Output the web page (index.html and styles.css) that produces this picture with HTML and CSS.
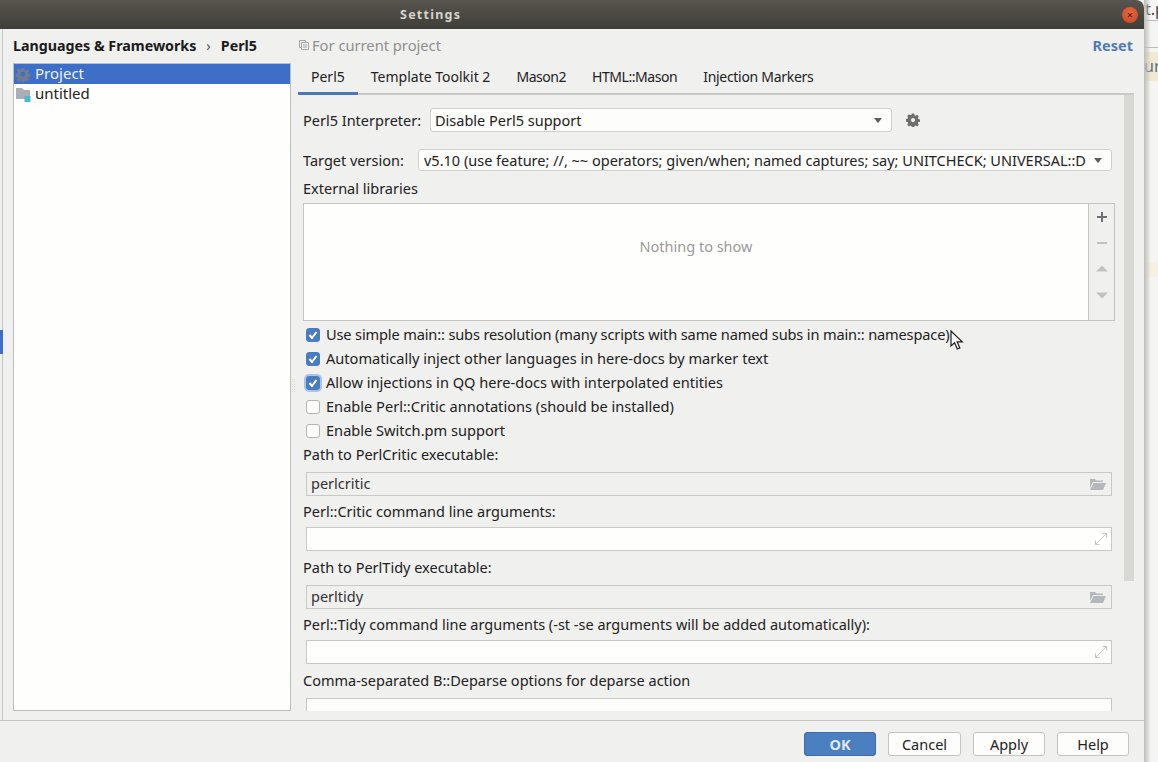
FILE: index.html
```html
<!DOCTYPE html>
<html lang="en">
<head>
<meta charset="utf-8">
<title>Settings</title>
<link rel="stylesheet" href="styles.css">
</head>
<body>
<div class="dialog">
  <div class="titlebar">
    <span class="title">Settings</span>
    <span class="close">×</span>
  </div>
  <div class="main">
    <div class="edge"><div class="edge-mark"></div></div>
    <div class="left">
      <div class="crumbs"><b>Languages &amp; Frameworks</b><span class="sep">›</span><b>Perl5</b></div>
      <div class="tree">
        <div class="tree-row selected">
          <svg class="tree-icon" width="16" height="16" viewBox="0 0 16 16"><path fill="#6f7c94" fill-rule="evenodd" d="M6.6 1h2.8l.4 2 1.5.7 1.8-1 1.9 2-1 1.7.6 1.5 2 .5v2.6l-2 .5-.6 1.5 1 1.7-1.9 2-1.8-1-1.5.7-.4 2H6.600l-.4-2-1.500-.7-1.800 1-1.900-2 1-1.700-.6-1.500-2-.5V7.400l2-.5.6-1.500-1-1.700 1.900-2 1.800 1 1.500-.7zM8 5.500a2.800 2.800 0 1 0 0 5.600 2.800 2.800 0 0 0 0-5.600z" transform="translate(1.100 1.100) scale(.86)"/></svg>
          <span class="tree-text">Project</span>
        </div>
        <div class="tree-row">
          <svg class="tree-icon" width="16" height="16" viewBox="0 0 16 16"><path fill="#a9afb6" d="M1 2h6l2 2h6v9H1z"/><rect x="9.500" y="10" width="6" height="6" fill="#4fb8d0"/></svg>
          <span class="tree-text">untitled</span>
        </div>
      </div>
    </div>
    <div class="right">
      <div class="head">
        <span class="scope">
          <svg width="10" height="10" viewBox="0 0 10 10"><path fill="none" stroke="#a6a6a6" d="M.5.5h6v2M2.500 2.500h7v7h-7zM.5.5v7h2M4 5h4M4 7h4"/></svg>
          For current project
        </span>
        <span class="reset">Reset</span>
      </div>
      <div class="tabs">
        <span class="tab active">Perl5</span>
        <span class="tab">Template Toolkit 2</span>
        <span class="tab narrow">Mason2</span>
        <span class="tab narrow">HTML::Mason</span>
        <span class="tab slim">Injection Markers</span>
      </div>
      <div class="pane">
        <div class="content">
          <div class="row row-interp">
            <span class="row-label">Perl5 Interpreter:</span>
            <div class="combo combo-interp"><span class="combo-text">Disable Perl5 support</span><i class="caret"></i></div>
            <svg class="gear" width="14" height="14" viewBox="0 0 14 14"><path fill="#6e6e6e" fill-rule="evenodd" d="M5.800.5h2.400l.3 1.800 1.100.5 1.500-1 1.700 1.700-1 1.500.5 1.100 1.800.3v2.400l-1.800.3-.5 1.100 1 1.500-1.700 1.700-1.500-1-1.100.5-.3 1.800H5.800l-.3-1.800-1.100-.5-1.500 1-1.700-1.700 1-1.500-.5-1.100-1.800-.3V5.900l1.800-.3.5-1.100-1-1.500 1.700-1.700 1.500 1 1.100-.5zM7 5a2.100 2.100 0 1 0 0 4.200A2.100 2.100 0 0 0 7 5z"/></svg>
          </div>
          <div class="row row-target">
            <span class="row-label">Target version:</span>
            <div class="combo combo-target"><span class="combo-text">v5.10 (use feature; //, ~~ operators; given/when; named captures; say; UNITCHECK; UNIVERSAL::D</span><i class="caret"></i></div>
          </div>
          <div class="text-label libs-label">External libraries</div>
          <div class="libs">
            <div class="libs-empty">Nothing to show</div>
            <div class="libs-tools">
              <svg width="12" height="12" viewBox="0 0 12 12"><path stroke="#6e6e6e" stroke-width="2" d="M6 1v10M1 6h10"/></svg>
              <svg width="12" height="12" viewBox="0 0 12 12"><path stroke="#c2c2be" stroke-width="2" d="M1 6h10"/></svg>
              <svg width="12" height="12" viewBox="0 0 12 12"><path fill="#c2c2be" d="M6 2.500l6 6H0z"/></svg>
              <svg width="12" height="12" viewBox="0 0 12 12"><path fill="#c2c2be" d="M0 3.500h12l-6 6z"/></svg>
            </div>
          </div>
          <div class="checks">
            <label class="check"><span class="box on"><svg width="14" height="14" viewBox="0 0 14 14"><path fill="none" stroke="#fff" stroke-width="2" d="M3.500 7l2.500 3 4.500-6"/></svg></span><span class="check-text tight">Use simple main:: subs resolution (many scripts with same named subs in main:: namespace)</span></label>
            <label class="check"><span class="box on"><svg width="14" height="14" viewBox="0 0 14 14"><path fill="none" stroke="#fff" stroke-width="2" d="M3.500 7l2.500 3 4.500-6"/></svg></span><span class="check-text">Automatically inject other languages in here-docs by marker text</span></label>
            <label class="check"><span class="box on focus"><svg width="14" height="14" viewBox="0 0 14 14"><path fill="none" stroke="#fff" stroke-width="2" d="M3.500 7l2.500 3 4.500-6"/></svg></span><span class="check-text">Allow injections in QQ here-docs with interpolated entities</span></label>
            <label class="check"><span class="box"></span><span class="check-text">Enable Perl::Critic annotations (should be installed)</span></label>
            <label class="check"><span class="box"></span><span class="check-text">Enable Switch.pm support</span></label>
          </div>
          <div class="text-label">Path to PerlCritic executable:</div>
          <div class="field disabled"><span class="field-text">perlcritic</span>
            <svg width="16" height="12" viewBox="0 0 16 12"><path fill="#b4b8bc" d="M0 1h5l1.500 1.500H13V4H3L0 10zM3.500 5H16l-3 7H0z"/></svg>
          </div>
          <div class="text-label after-disabled">Perl::Critic command line arguments:</div>
          <div class="field editable"><span></span>
            <svg width="14" height="14" viewBox="0 0 14 14"><path fill="none" stroke="#c0c4c8" d="M8.500 1.500H12.500V5.500M12.500 1.500L1.500 12.500M1.500 8.500V12.500H5.500"/></svg>
          </div>
          <div class="text-label after-editable">Path to PerlTidy executable:</div>
          <div class="field disabled"><span class="field-text">perltidy</span>
            <svg width="16" height="12" viewBox="0 0 16 12"><path fill="#b4b8bc" d="M0 1h5l1.500 1.500H13V4H3L0 10zM3.500 5H16l-3 7H0z"/></svg>
          </div>
          <div class="text-label after-disabled">Perl::Tidy command line arguments (-st -se arguments will be added automatically):</div>
          <div class="field editable"><span></span>
            <svg width="14" height="14" viewBox="0 0 14 14"><path fill="none" stroke="#c0c4c8" d="M8.500 1.500H12.500V5.500M12.500 1.500L1.500 12.500M1.500 8.500V12.500H5.500"/></svg>
          </div>
          <div class="text-label after-editable">Comma-separated B::Deparse options for deparse action</div>
          <div class="field editable last"></div>
        </div>
        <div class="scrollbar"><div class="thumb"></div></div>
      </div>
    </div>
  </div>
  <div class="footer">
    <button class="btn primary">OK</button>
    <button class="btn wide">Cancel</button>
    <button class="btn">Apply</button>
    <button class="btn">Help</button>
  </div>
</div>
<div class="backdrop">
  <div class="bd-top">t.p</div>
  <div class="bd-gap"></div>
  <div class="bd-band">ur</div>
  <div class="bd-faint"></div>
</div>
<div class="grip"></div>
<svg class="pointer" width="14" height="21" viewBox="0 0 14 21"><path fill="#fff" stroke="#1c1c1c" stroke-width="1.200" d="M1 1v15l3.600-3.200 2.700 6.200 2.600-1.100-2.700-6h5z"/></svg>
</body>
</html>
```
FILE: styles.css
```css
* { box-sizing: border-box; }
html, body { margin: 0; padding: 0; }
body {
  position: relative;
  display: flex;
  width: 1158px;
  height: 762px;
  overflow: hidden;
  background: #f5f5f3;
  font-family: "Noto Sans", "Open Sans", sans-serif;
  font-size: 14.500px;
  color: #222;
}
.dialog {
  width: 1144px;
  height: 762px;
  display: flex;
  flex-direction: column;
  background: #f0f0ee;
}
.titlebar {
  height: 29px;
  flex: none;
  display: flex;
  align-items: center;
  justify-content: space-between;
  padding: 0 6px 0 400px;
  background: linear-gradient(#57554d, #3f3e38);
  border-radius: 0 8px 0 0;
}
.title {
  font-weight: 700;
  font-size: 12.500px;
  letter-spacing: 1.250px;
  color: #d6d3ca;
}
.close {
  width: 16px;
  height: 16px;
  border-radius: 50%;
  background: radial-gradient(circle at 50% 35%, #e8683f, #c9431f);
  color: #3a2018;
  font-size: 11px;
  line-height: 16px;
  text-align: center;
}
.main {
  height: 692px;
  flex: none;
  display: flex;
  border-bottom: 1px solid #c4c6c4;
}
.edge {
  width: 3px;
  border-right: 1px solid #c2c8cc;
  padding-top: 301px;
}
.edge-mark { height: 24px; background: #3d6fc8; margin-right: -1px; }
.left { width: 295px; padding-left: 10px; flex: none; }
.crumbs {
  height: 34px;
  display: flex;
  align-items: center;
  padding-bottom: 2px;
  color: #1a1a1a;
  font-size: 14.250px;
}
.crumbs b { font-weight: 700; }
.sep { margin: 0 10px; color: #555; }
.tree {
  width: 278px;
  height: 648px;
  background: #fefefc;
  border: 1px solid #bcbfc0;
}
.tree-row {
  height: 20px;
  display: flex;
  align-items: center;
  gap: 4px;
  padding-left: 1px;
  font-size: 15px;
}
.tree-text { margin-bottom: 2px; }
.tree-row.selected { background: #3d6fc8; color: #eef1f8; }
.tree-icon { flex: none; }
.right { flex: 1; min-width: 0; }
.head {
  height: 35px;
  display: flex;
  align-items: center;
  justify-content: space-between;
  padding: 0 11px 3px 1px;
}
.scope { color: #8f8f8f; display: flex; align-items: center; gap: 3px; font-size: 14.700px; }
.reset { font-weight: 700; color: #4f7bb8; }
.tabs {
  height: 31px;
  width: 836px;
  display: flex;
  border-bottom: 2px solid #c8c8c6;
  font-size: 14px;
}
.tab {
  height: 31px;
  padding: 0 13px;
  line-height: 26px;
}
.tab.active { border-bottom: 3px solid #4a76bc; }
.tab.narrow { letter-spacing: -0.450px; }
.tab.slim { letter-spacing: -0.300px; }
.pane { height: 616px; display: flex; overflow: hidden; }
.content { width: 826px; flex: none; padding: 13px 0 0 5px; }
.scrollbar { width: 10px; flex: none; }
.thumb { height: 486px; background: #d8d8d4; }
.row { display: flex; align-items: center; }
.row-interp { height: 24px; }
.row-target { height: 22px; margin-top: 17px; }
.row-label { flex: none; }
.row-interp .row-label { width: 127px; }
.row-target .row-label { width: 115px; }
.combo {
  display: flex;
  align-items: center;
  justify-content: space-between;
  height: 100%;
  background: #fdfdfb;
  border: 1px solid #cfcfcb;
  border-radius: 3px;
  padding: 0 9px 0 5px;
  white-space: nowrap;
  overflow: hidden;
}
.combo-interp { width: 462px; padding-left: 4px; }
.combo-target { width: 694px; }
.combo-text { overflow: hidden; }
.caret {
  flex: none;
  width: 0;
  height: 0;
  border-left: 4.500px solid transparent;
  border-right: 4.500px solid transparent;
  border-top: 5px solid #5c5c5c;
}
.gear { margin-left: 14px; }
.text-label { height: 24px; line-height: 22px; white-space: nowrap; }
.libs-label { margin-top: 6px; }
.libs {
  margin-top: 2px;
  width: 812px;
  height: 118px;
  display: flex;
  background: #fefefc;
  border: 1px solid #c4c4c0;
}
.libs-empty {
  flex: 1;
  text-align: center;
  color: #9a9a9a;
  padding-top: 32px;
}
.libs-tools {
  width: 26px;
  flex: none;
  display: flex;
  flex-direction: column;
  align-items: center;
  gap: 14px;
  padding-top: 7px;
  background: #f0f0ee;
  border-left: 1px solid #c4c4c0;
}
.checks { margin-top: 2px; font-size: 14.600px; }
.check { height: 24px; display: flex; align-items: center; padding-left: 3px; gap: 6px; white-space: nowrap; }
.check-text { margin-bottom: 2px; }
.check-text.tight { letter-spacing: -0.150px; }
.box {
  width: 14px;
  height: 14px;
  flex: none;
  border: 1px solid #b4b4b0;
  border-radius: 3px;
  background: #fdfdfb;
}
.box svg { display: block; margin: -1px; }
.box.on { background: #4a7cc0; border-color: #4a7cc0; }
.box.focus { box-shadow: 0 0 0 2px #a9c4e6; }
.field {
  margin-left: 3px;
  width: 806px;
  height: 24px;
  display: flex;
  align-items: center;
  justify-content: space-between;
  padding: 0 5px 0 4px;
  border: 1px solid #c8c8c4;
}
.field-text { margin-bottom: 2px; }
.field.disabled { background: #f0f0ee; margin-top: 5px; color: #333; }
.field.editable { background: #fefefc; margin-top: 3px; padding-right: 3px; }
.field.last { margin-top: 5px; }
.after-disabled { margin-top: 4px; }
.after-editable { margin-top: 5px; }
.backdrop {
  position: relative;
  width: 14px;
  flex: none;
  overflow: hidden;
  color: #444;
  font-size: 16px;
}
.backdrop::before {
  content: "";
  position: absolute;
  inset: 0;
  width: 7px;
  background: linear-gradient(90deg, #bdbdb9, rgba(245,245,243,0));
}
.bd-top { height: 21px; line-height: 18px; border-bottom: 1px solid #bbb; padding-left: 1px; white-space: nowrap; }
.bd-gap { height: 27px; border-bottom: 1px solid #bbb; }
.bd-band { margin-top: 4px; height: 29px; line-height: 29px; background: #f1e9d0; color: #56708c; }
.bd-faint { margin-top: 181px; height: 15px; background: #f6f1e2; }
.grip {
  position: absolute;
  left: 291px;
  top: 378px;
  width: 5px;
  height: 15px;
  background-image: radial-gradient(circle, #bdbdb9 0.7px, transparent 0.8px);
  background-size: 2.500px 2.500px;
}
.pointer { position: absolute; left: 950px; top: 330px; }
.footer {
  flex: 1;
  display: flex;
  justify-content: flex-end;
  gap: 12px;
  padding: 11px 15px 0 0;
}
.btn {
  width: 72px;
  height: 24px;
  padding: 0;
  font: inherit;
  color: #222;
  background: #fdfdfb;
  border: 1px solid #c4c4c0;
  border-radius: 3px;
}
.btn.wide { width: 73px; }
.btn.primary { background: #4a7fc0; border-color: #3d6ca8; color: #dfe8f3; font-weight: 700; }
```
